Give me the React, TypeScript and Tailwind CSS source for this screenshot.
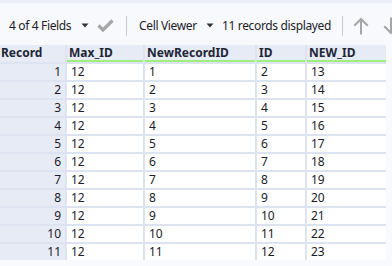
import React from "react";

const rows = Array.from({ length: 11 }, (_, i) => ({
  rec: i + 1,
  max: 12,
  nr: i + 1,
  id: i + 2,
  nid: i + 13,
}));

function Caret() {
  return (
    <svg width="8" height="5" viewBox="0 0 8 5" className="block">
      <path d="M0.5 0.5 L7.5 0.5 L4 4.5 Z" fill="#333" />
    </svg>
  );
}

export default function App() {
  const font = { fontFamily: '"Segoe UI", "Noto Sans", "Open Sans", sans-serif' };
  return (
    <div className="w-[392px] h-[266px] overflow-hidden bg-[#f9fafd] text-[#1c1c28]" style={font}>
      <div className="h-[3px] bg-[#eceff7]" />
      <div className="h-[42px] flex items-center text-[12px] tracking-[-0.35px] bg-[#f8f9fc] whitespace-nowrap pt-[3px]">
        <span className="ml-[9px] w-[72px] shrink-0">4 of 4 Fields</span>
        <span className="w-[12px] shrink-0"><Caret /></span>
        <svg width="17" height="13" viewBox="0 0 17 13" className="ml-[4px] shrink-0">
          <path d="M1.5 6.5 L6 11 L15.5 1.5" fill="none" stroke="#a6a6a6" strokeWidth="3.2" />
        </svg>
        <div className="ml-[12px] w-px h-[20px] bg-[#c8c8c8] shrink-0" />
        <span className="ml-[12px] w-[67px] shrink-0">Cell Viewer</span>
        <span className="w-[16px] shrink-0"><Caret /></span>
        <span className="w-[106px] shrink-0">11 records displayed</span>
        <div className="ml-[14px] w-px h-[20px] bg-[#c8c8c8] shrink-0" />
        <svg width="16" height="18" viewBox="0 0 16 18" className="ml-[10px] shrink-0">
          <path d="M8 17.5 V2 M1.2 8.8 L8 2 L14.8 8.8" fill="none" stroke="#a6a6a6" strokeWidth="2" />
        </svg>
        <svg width="16" height="18" viewBox="0 0 16 18" className="ml-[14px] shrink-0">
          <path d="M8 0.5 V16 M1.2 9.2 L8 16 L14.8 9.2" fill="none" stroke="#a6a6a6" strokeWidth="2" />
        </svg>
      </div>
      <div className="grid grid-cols-[65px_76px_110px_48px_79px] gap-[2px] bg-[#dde3f0] w-[386px] text-[12px] leading-[16px]">
        <div className="h-[17px] bg-[#e6ebf5] font-bold pl-[1px] text-[#1e2636]">Record</div>
        {["Max_ID", "NewRecordID", "ID", "NEW_ID"].map((h) => (
          <div key={h} className="h-[17px] bg-[#e6ebf5] font-bold pl-[2px] border-b-[2px] border-[#9ef07c] text-[#1e2636] leading-[15px]">
            {h}
          </div>
        ))}
        {rows.map((r) => (
          <React.Fragment key={r.rec}>
            <div className="h-[16px] bg-[#e6ebf5] text-right pr-[4px]">{r.rec}</div>
            <div className="h-[16px] bg-white pl-[4px]">{r.max}</div>
            <div className="h-[16px] bg-white pl-[4px]">{r.nr}</div>
            <div className="h-[16px] bg-white pl-[4px]">{r.id}</div>
            <div className="h-[16px] bg-white pl-[4px]">{r.nid}</div>
          </React.Fragment>
        ))}
      </div>
    </div>
  );
}
